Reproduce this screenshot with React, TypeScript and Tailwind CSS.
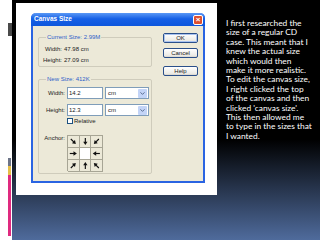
import { ChevronDown } from 'lucide-react';

const Arrow = ({ deg }: { deg: number }) => (
  <svg width="11" height="11" viewBox="0 0 12 12">
    <g transform={`rotate(${deg} 6 6)`}>
      <line x1="2" y1="6" x2="7" y2="6" stroke="#111" strokeWidth="1.3" />
      <path d="M10 6 L6.2 3.6 L6.2 8.4 Z" fill="#111" />
    </g>
  </svg>
);

const anchors = [45, 90, 135, 0, null, 180, -45, -90, -135];

const lines = [
  'I first researched the',
  'size of a regular CD',
  'case. This meant that I',
  'knew the actual size',
  'which would then',
  'make it more realistic.',
  'To edit the canvas size,',
  'I right clicked the top',
  'of the canvas and then',
  "clicked 'canvas size'.",
  'This then allowed me',
  'to type in the sizes that',
  'I wanted.',
];

const Button = ({ label, focus }: { label: string; focus?: boolean }) => (
  <div className="h-[10px] w-[35px] rounded-[2px] border border-[#2a4f8a] bg-[linear-gradient(to_bottom,#ffffff,#ecebe6_80%,#d8d5cc)] flex items-center justify-center">
    <div
      className={
        focus
          ? 'w-[33px] h-[8px] rounded-[1px] border border-[#a9c3f0] flex items-center justify-center'
          : 'w-[33px] h-[8px] flex items-center justify-center'
      }
    >
      <span className="leading-none text-[6px] text-[#222]">{label}</span>
    </div>
  </div>
);

const Dialog = () => (
  <div className="w-[174px] h-[170px] rounded-t-[5px] border-[2px] border-t-0 border-[#2a64e2] flex flex-col font-['Liberation_Sans',sans-serif]">
    {/* title bar */}
    <div className="h-[13px] -mx-[2px] rounded-t-[5px] bg-[linear-gradient(to_bottom,#5a98f5,#1660e6_45%,#0d56dc)] flex items-center justify-between pl-[3px] pr-[2px]">
      <span className="text-[6.5px] font-bold text-white leading-none">Canvas Size</span>
      <div className="w-[10px] h-[10px] rounded-[2px] border border-white bg-[#dd5030] flex items-center justify-center">
        <span className="text-[8px] font-bold text-white leading-none">×</span>
      </div>
    </div>

    {/* body */}
    <div className="flex-1 bg-[#ece9d8] flex pl-[5px] pt-[7px] text-[6px] text-[#222]">
      <div className="w-[114px] flex flex-col">
        {/* current size */}
        <div className="relative mt-[4px] h-[30px] border border-[#cfccbc] rounded-[2px] pt-[6px]">
          <span className="absolute -top-[4px] left-[7px] bg-[#ece9d8] px-[1px] leading-none text-[#2e5fc9]">
            Current Size: 2.99M
          </span>
          <div className="flex leading-[11px]">
            <span className="w-[23px] text-right">Width:</span>
            <span className="ml-[2px]">47.98 cm</span>
          </div>
          <div className="flex leading-[11px]">
            <span className="w-[23px] text-right">Height:</span>
            <span className="ml-[2px]">27.09 cm</span>
          </div>
        </div>

        {/* new size */}
        <div className="relative mt-[12px] h-[95px] border border-[#cfccbc] rounded-[2px] pt-[7px] flex flex-col">
          <span className="absolute -top-[4px] left-[7px] bg-[#ece9d8] px-[1px] leading-none text-[#2e5fc9]">
            New Size: 412K
          </span>
          {['Width:', 'Height:'].map((l, i) => (
            <div key={l} className={i ? 'flex items-center mt-[5px]' : 'flex items-center'}>
              <span className="w-[26px] text-right">{l}</span>
              <div className="ml-[2px] w-[36px] h-[12px] bg-white border border-[#7f9db9] flex items-center pl-[1px]">
                {i ? '12.3' : '14.2'}
              </div>
              <div className="ml-[2px] w-[44px] h-[12px] bg-white border border-[#7f9db9] flex items-center justify-between pl-[2px] pr-[1px]">
                <span>cm</span>
                <div className="w-[9px] h-[9px] rounded-[1px] bg-[#c3d4f7] flex items-center justify-center">
                  <ChevronDown size={7} strokeWidth={3} color="#4d6185" />
                </div>
              </div>
            </div>
          ))}
          <div className="flex items-center mt-[2px] pl-[28px]">
            <div className="w-[6px] h-[6px] bg-white border border-[#1c5180]" />
            <span className="ml-[1px] leading-none">Relative</span>
          </div>
          <div className="flex mt-[11px]">
            <span className="w-[26px] text-right leading-none mt-[-0.5px]">Anchor:</span>
            <div className="ml-[2px] grid grid-cols-3 w-[36px] h-[36px] border-t border-l border-[#a7a595]">
              {anchors.map((d, i) => (
                <div
                  key={i}
                  className={
                    d === null
                      ? 'bg-white border-r border-b border-[#a7a595]'
                      : 'bg-[#ece9d8] border-r border-b border-[#a7a595] flex items-center justify-center'
                  }
                >
                  {d !== null && <Arrow deg={d} />}
                </div>
              ))}
            </div>
          </div>
        </div>
      </div>

      {/* buttons */}
      <div className="ml-[11px] flex flex-col">
        <Button label="OK" focus />
        <div className="mt-[5px]">
          <Button label="Cancel" />
        </div>
        <div className="mt-[8px]">
          <Button label="Help" />
        </div>
      </div>
    </div>
  </div>
);

const App = () => {
  return (
    <div className="w-[320px] h-[240px] flex overflow-hidden bg-[linear-gradient(to_bottom,#000_0%,#000_58%,#4f6b9c_100%)]">
      {/* left edge strip */}
      <div className="relative w-[12px] h-full bg-white shrink-0">
        <div className="absolute left-[8px] top-[23px] w-[4px] h-[13px] bg-[#4a4a4a]" />
        <div className="absolute left-[8px] top-[158px] w-[3px] h-[8px] bg-[#6d7488]" />
        <div className="absolute left-[8px] top-[166px] w-[3px] h-[9px] bg-[#e6bf48]" />
        <div className="absolute left-[8px] top-[175px] w-[3px] h-[61px] bg-[#df2a7f]" />
      </div>

      {/* screenshot */}
      <div className="pl-[4px] pt-[3px] shrink-0">
        <div className="w-[201px] h-[192px] bg-white pl-[15px] pt-[10px]">
          <Dialog />
        </div>
      </div>

      {/* description */}
      <div className="pl-[9px] pt-[19px] shrink-0">
        <div className="text-white text-[8.4px] leading-[9.4px] font-['Lato',sans-serif]">
          {lines.map((l) => (
            <div key={l} className="whitespace-nowrap">
              {l}
            </div>
          ))}
        </div>
      </div>
    </div>
  );
};

export default App;
